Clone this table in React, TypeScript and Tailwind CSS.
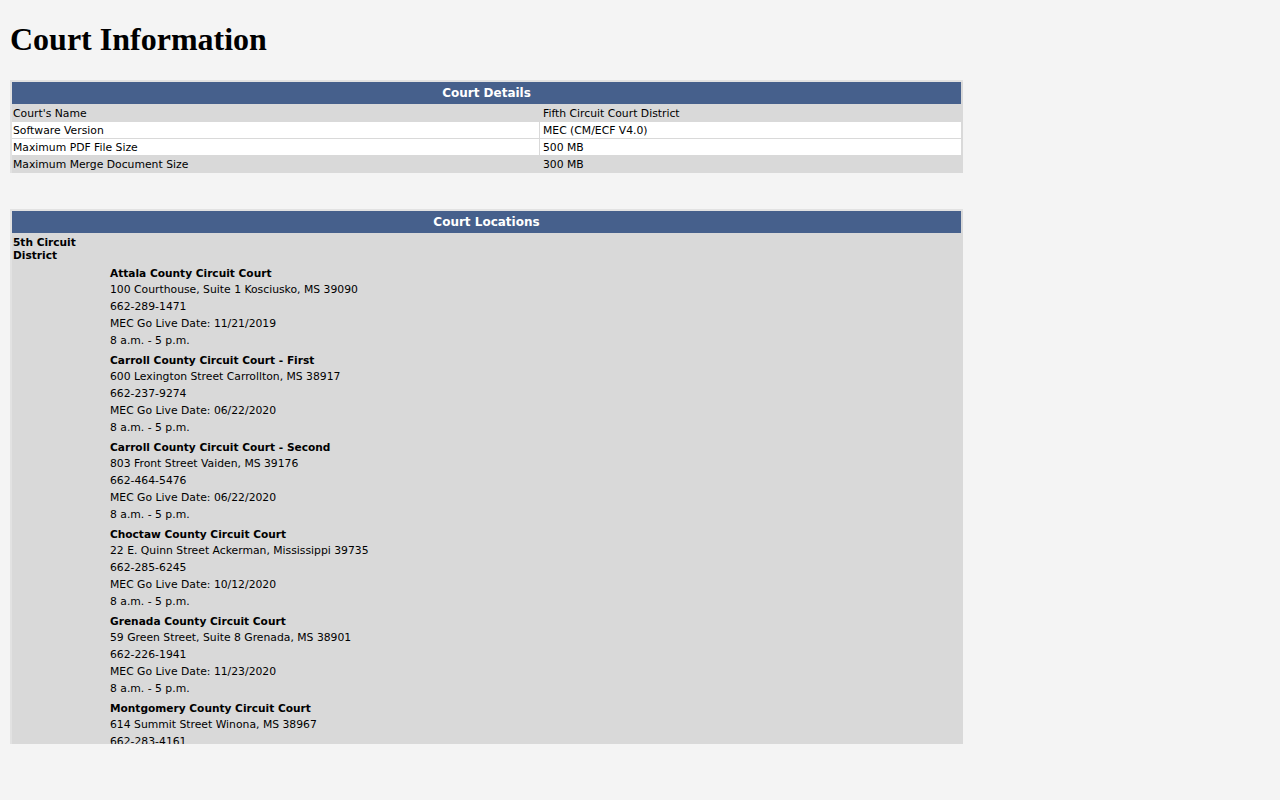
import React from 'react';

const details = [
    { label: "Court's Name", value: 'Fifth Circuit Court District', white: false },
    { label: 'Software Version', value: 'MEC (CM/ECF V4.0)', white: true },
    { label: 'Maximum PDF File Size', value: '500 MB', white: true },
    { label: 'Maximum Merge Document Size', value: '300 MB', white: false },
];

const courts = [
    {
        name: 'Attala County Circuit Court',
        address: '100 Courthouse, Suite 1 Kosciusko, MS 39090',
        phone: '662-289-1471',
        live: '11/21/2019',
    },
    {
        name: 'Carroll County Circuit Court - First',
        address: '600 Lexington Street Carrollton, MS 38917',
        phone: '662-237-9274',
        live: '06/22/2020',
    },
    {
        name: 'Carroll County Circuit Court - Second',
        address: '803 Front Street Vaiden, MS 39176',
        phone: '662-464-5476',
        live: '06/22/2020',
    },
    {
        name: 'Choctaw County Circuit Court',
        address: '22 E. Quinn Street Ackerman, Mississippi 39735',
        phone: '662-285-6245',
        live: '10/12/2020',
    },
    {
        name: 'Grenada County Circuit Court',
        address: '59 Green Street, Suite 8 Grenada, MS 38901',
        phone: '662-226-1941',
        live: '11/23/2020',
    },
    {
        name: 'Montgomery County Circuit Court',
        address: '614 Summit Street Winona, MS 38967',
        phone: '662-283-4161',
        live: '11/23/2020',
    },
];

const SectionHeader = ({ title }: { title: string }) => (
    <div className="h-[22px] bg-[#46608c] flex items-center justify-center text-white font-bold text-[12px]">
        {title}
    </div>
);

export default function App() {
    return (
        <div className="min-h-[800px] bg-[#f4f4f4] px-[10px] font-['DejaVu_Sans',Verdana,sans-serif] text-[10.8px] text-black">
            <h1 className="m-0 pt-[21px] pb-[22px] font-['Liberation_Serif',serif] text-[32px] font-bold leading-[37px]">
                Court Information
            </h1>

            <div className="w-[953px] bg-[#d9d9d9] border-t-2 border-l-2 border-[#e2e2e2] pr-[2px] pb-[1px] flex flex-col gap-[1px]">
                <SectionHeader title="Court Details" />
                {details.map((d) => (
                    <div key={d.label} className="flex gap-[1px] h-[16px]">
                        <div className={`w-[527px] pl-[1px] pt-[2px] flex items-center ${d.white ? 'bg-white' : ''}`}>
                            {d.label}
                        </div>
                        <div className={`flex-1 pl-[3px] pt-[2px] flex items-center ${d.white ? 'bg-white' : ''}`}>
                            {d.value}
                        </div>
                    </div>
                ))}
            </div>

            <div className="mt-[36px] w-[953px] h-[535px] overflow-hidden bg-[#d9d9d9] border-t-2 border-l-2 border-[#e2e2e2] pr-[2px]">
                <SectionHeader title="Court Locations" />
                <div className="pt-[3px] pb-[3px] pl-[1px] w-[96px] font-bold text-[10.6px] leading-[13px]">
                    5th Circuit District
                </div>
                <div className="pl-[98px] flex flex-col gap-[2px]">
                    {courts.map((c) => (
                        <div key={c.name} className="flex flex-col">
                            <div className="h-[17px] flex items-center font-bold text-[10.6px]">{c.name}</div>
                            <div className="h-[17px] flex items-center">{c.address}</div>
                            <div className="h-[17px] flex items-center">{c.phone}</div>
                            <div className="h-[17px] flex items-center">MEC Go Live Date: {c.live}</div>
                            <div className="h-[17px] flex items-center">8 a.m. - 5 p.m.</div>
                        </div>
                    ))}
                </div>
            </div>
        </div>
    );
}
